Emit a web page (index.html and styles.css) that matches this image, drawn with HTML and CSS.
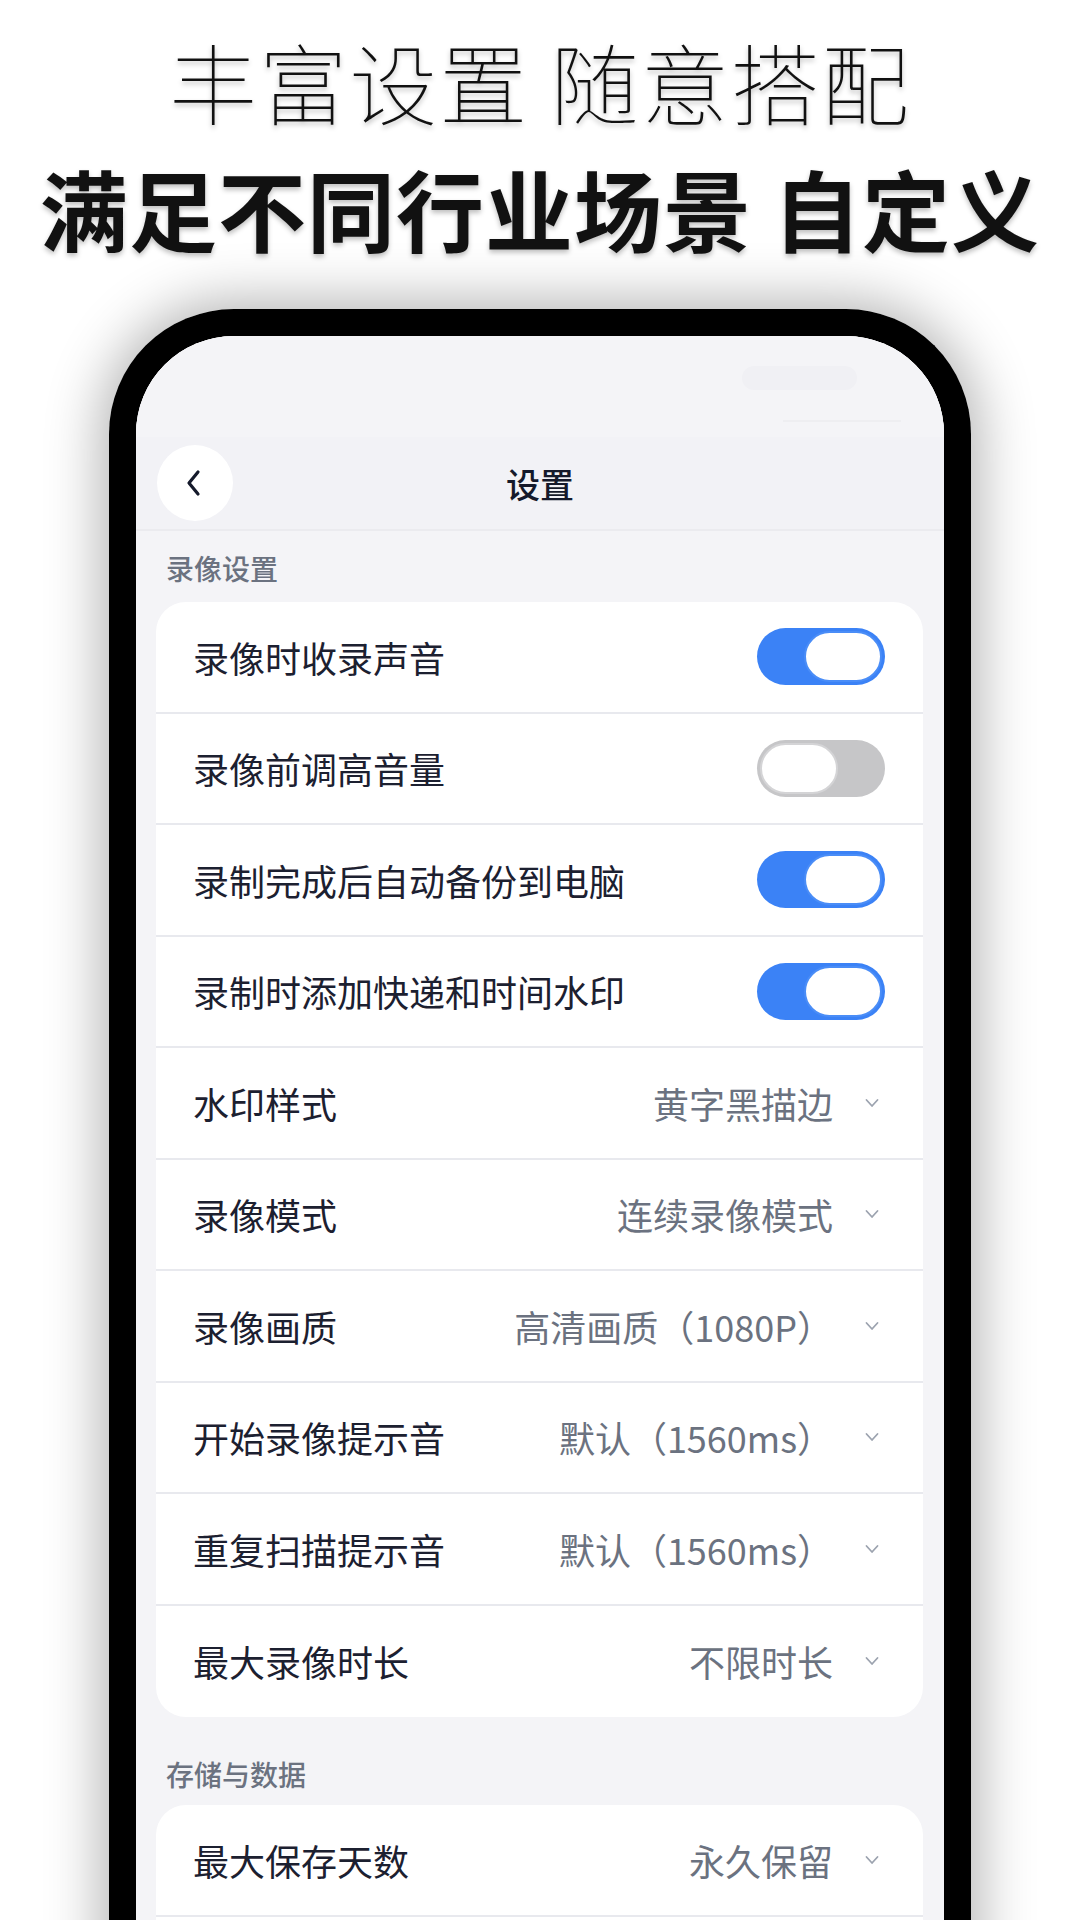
FILE: index.html
```html
<!DOCTYPE html>
<html lang="zh-CN">
<head>
  <meta charset="UTF-8">
  <title>设置</title>
  <meta name="viewport" content="width=device-width, initial-scale=1.0">
  <link rel="stylesheet" href="styles.css">
</head>
<body>
  <div class="headline">
    <div class="line1">丰富设置 随意搭配</div>
    <div class="line2">满足不同行业场景 自定义</div>
  </div>

  <div class="phone">
    <div class="screen">
      <div class="statusbar">
        <div class="ghost-pill"></div>
        <div class="ghost-line"></div>
      </div>

      <div class="navbar">
        <div class="back">
          <svg width="20" height="28" viewBox="0 0 20 28"><path d="M14 3 L5 14 L14 25" fill="none" stroke="#151a2b" stroke-width="3.2" stroke-linecap="round" stroke-linejoin="round"/></svg>
        </div>
        <div class="title">设置</div>
      </div>

      <div class="section-label first">录像设置</div>
      <div class="card">
        <div class="row">
          <span class="label">录像时收录声音</span>
          <span class="toggle on"><span class="knob"></span></span>
        </div>
        <div class="row">
          <span class="label">录像前调高音量</span>
          <span class="toggle"><span class="knob"></span></span>
        </div>
        <div class="row">
          <span class="label">录制完成后自动备份到电脑</span>
          <span class="toggle on"><span class="knob"></span></span>
        </div>
        <div class="row">
          <span class="label">录制时添加快递和时间水印</span>
          <span class="toggle on"><span class="knob"></span></span>
        </div>
        <div class="row">
          <span class="label">水印样式</span>
          <span class="value">黄字黑描边</span>
          <svg class="chev" width="14" height="10" viewBox="0 0 14 10"><path d="M1.5 2 L7 8 L12.5 2" fill="none" stroke="#9ca3af" stroke-width="1.8" stroke-linecap="round" stroke-linejoin="round"/></svg>
        </div>
        <div class="row">
          <span class="label">录像模式</span>
          <span class="value">连续录像模式</span>
          <svg class="chev" width="14" height="10" viewBox="0 0 14 10"><path d="M1.5 2 L7 8 L12.5 2" fill="none" stroke="#9ca3af" stroke-width="1.8" stroke-linecap="round" stroke-linejoin="round"/></svg>
        </div>
        <div class="row">
          <span class="label">录像画质</span>
          <span class="value">高清画质（1080P）</span>
          <svg class="chev" width="14" height="10" viewBox="0 0 14 10"><path d="M1.5 2 L7 8 L12.5 2" fill="none" stroke="#9ca3af" stroke-width="1.8" stroke-linecap="round" stroke-linejoin="round"/></svg>
        </div>
        <div class="row">
          <span class="label">开始录像提示音</span>
          <span class="value">默认（1560ms）</span>
          <svg class="chev" width="14" height="10" viewBox="0 0 14 10"><path d="M1.5 2 L7 8 L12.5 2" fill="none" stroke="#9ca3af" stroke-width="1.8" stroke-linecap="round" stroke-linejoin="round"/></svg>
        </div>
        <div class="row">
          <span class="label">重复扫描提示音</span>
          <span class="value">默认（1560ms）</span>
          <svg class="chev" width="14" height="10" viewBox="0 0 14 10"><path d="M1.5 2 L7 8 L12.5 2" fill="none" stroke="#9ca3af" stroke-width="1.8" stroke-linecap="round" stroke-linejoin="round"/></svg>
        </div>
        <div class="row">
          <span class="label">最大录像时长</span>
          <span class="value">不限时长</span>
          <svg class="chev" width="14" height="10" viewBox="0 0 14 10"><path d="M1.5 2 L7 8 L12.5 2" fill="none" stroke="#9ca3af" stroke-width="1.8" stroke-linecap="round" stroke-linejoin="round"/></svg>
        </div>
      </div>

      <div class="section-label second">存储与数据</div>
      <div class="card">
        <div class="row">
          <span class="label">最大保存天数</span>
          <span class="value">永久保留</span>
          <svg class="chev" width="14" height="10" viewBox="0 0 14 10"><path d="M1.5 2 L7 8 L12.5 2" fill="none" stroke="#9ca3af" stroke-width="1.8" stroke-linecap="round" stroke-linejoin="round"/></svg>
        </div>
        <div class="row"></div>
      </div>
    </div>
  </div>
</body>
</html>
```

FILE: styles.css
```css
* {
  box-sizing: border-box;
}

body {
  margin: 0;
  background: #fff;
  font-family: "Noto Sans CJK SC", "Noto Sans", sans-serif;
  height: 1920px;
  overflow: hidden;
}

.headline {
  text-align: center;
  padding-top: 28px;
  color: #111;
}

.line1 {
  font-size: 88px;
  font-weight: 100;
  line-height: 104px;
  letter-spacing: 2px;
  text-shadow: 0 3px 5px rgba(0,0,0,0.25);
}

.line2 {
  font-size: 88px;
  font-weight: 700;
  line-height: 150px;
  letter-spacing: 1px;
  text-shadow: 0 3px 5px rgba(0,0,0,0.25);
}

.phone {
  width: 862px;
  height: 1700px;
  margin: 27px auto 0;
  border: 27px solid #000;
  border-bottom: none;
  border-radius: 125px 125px 0 0;
  box-shadow: 0 0 55px 8px rgba(0,0,0,0.3);
}

.screen {
  height: 100%;
  background: #f4f4f7;
  border-radius: 98px 98px 0 0;
  overflow: hidden;
}

.statusbar {
  height: 101px;
  background: #f4f4f7;
  display: flex;
  flex-direction: column;
  align-items: flex-end;
  padding: 30px 47px 0 0;
}

.ghost-pill {
  width: 115px;
  height: 24px;
  border-radius: 12px;
  background: #f0f0f4;
  margin-right: 40px;
}

.ghost-line {
  width: 118px;
  height: 2px;
  background: #eeeef1;
  margin-top: 30px;
  margin-right: -4px;
}

.navbar {
  height: 94px;
  background: #f2f2f6;
  border-bottom: 2px solid #ebebef;
  display: flex;
  align-items: center;
  padding-left: 21px;
}

.back {
  width: 76px;
  height: 76px;
  border-radius: 50%;
  background: #fff;
  display: flex;
  align-items: center;
  justify-content: center;
  padding-right: 2px;
}

.title {
  flex: 1;
  text-align: center;
  font-size: 34px;
  font-weight: 500;
  color: #151a2b;
  margin-right: 97px;
}

.section-label {
  font-size: 28px;
  font-weight: 500;
  line-height: 36px;
  color: #6b7280;
  padding-left: 30px;
}

.section-label.first {
  margin: 19px 0 16px;
}

.section-label.second {
  margin: 39px 0 13px;
}

.card {
  margin: 0 21px 0 20px;
  background: #fff;
  border-radius: 30px;
  overflow: hidden;
}

.row {
  height: 111.5px;
  display: flex;
  align-items: center;
  padding: 0 38px 0 37px;
  border-bottom: 2px solid #e8e9ee;
}

.card .row:last-child {
  border-bottom: none;
}

.label {
  flex: 1;
  font-size: 36px;
  color: #1c2030;
}

.value {
  font-size: 36px;
  color: #6b7280;
  margin-right: 32px;
}

.chev {
  margin-right: 6px;
}

.toggle {
  width: 128px;
  height: 57px;
  border-radius: 29px;
  background: #c6c6c8;
  padding: 3px;
  display: flex;
}

.toggle .knob {
  width: 78px;
  height: 51px;
  border-radius: 26px;
  background: #fff;
  border: 2px solid #d4d4d6;
}

.toggle.on {
  background: #3b82f6;
  justify-content: flex-end;
}

.toggle.on .knob {
  border-color: #4a8df7;
}
```
